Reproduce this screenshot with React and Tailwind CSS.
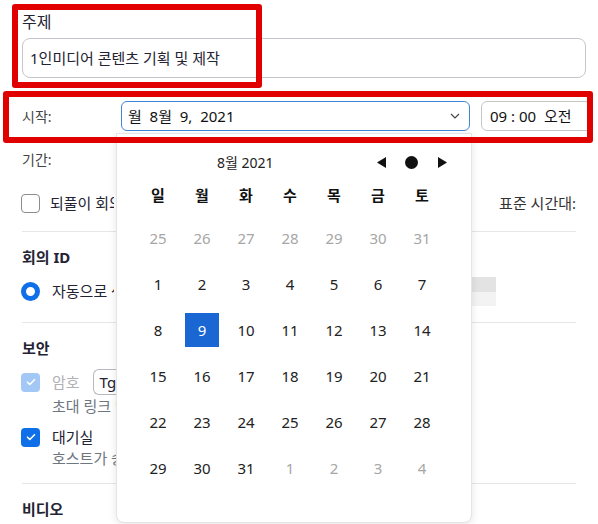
import React from "react";

const FONT = { fontFamily: "'Noto Sans', 'Noto Sans CJK KR', sans-serif" };

function Check({ disabled }) {
  return (
    <div
      className={`w-[19px] h-[19px] rounded-[4px] flex items-center justify-center ${
        disabled ? "bg-[#a3c8f5]" : "bg-[#0e6fe8]"
      }`}
    >
      <svg width="12" height="12" viewBox="0 0 12 12" fill="none" stroke="white" strokeWidth="1.6">
        <path d="M2.5 6.2l2.3 2.3 4.7-4.8" strokeLinecap="round" strokeLinejoin="round" />
      </svg>
    </div>
  );
}

const weeks = [
  [25, 26, 27, 28, 29, 30, 31],
  [1, 2, 3, 4, 5, 6, 7],
  [8, 9, 10, 11, 12, 13, 14],
  [15, 16, 17, 18, 19, 20, 21],
  [22, 23, 24, 25, 26, 27, 28],
  [29, 30, 31, 1, 2, 3, 4],
];

function Calendar() {
  return (
    <div className="absolute left-[116px] top-[133px] w-[356px] h-[390px] bg-white border border-[#e4e4e6] rounded-b-[8px] shadow-[0_2px_8px_rgba(0,0,0,0.10)] pt-[17px]">
      <div className="flex items-center h-[22px]">
        <span className="ml-[100px] text-[14px] text-[#222]">8월 2021</span>
        <div className="ml-[103px] flex items-center">
          <svg width="9" height="11" viewBox="0 0 9 11">
            <path d="M0 5.5L9 0v11z" fill="#111" />
          </svg>
          <div className="ml-[19px] w-[13px] h-[13px] rounded-full bg-[#111]" />
          <svg className="ml-[20px]" width="9" height="11" viewBox="0 0 9 11">
            <path d="M9 5.5L0 0v11z" fill="#111" />
          </svg>
        </div>
      </div>
      <div className="mt-[11px] ml-[19px] grid grid-cols-7 w-[308px] h-[22px] items-center">
        {["일", "월", "화", "수", "목", "금", "토"].map((d) => (
          <span key={d} className="text-center text-[15px] font-bold text-[#111]">
            {d}
          </span>
        ))}
      </div>
      <div className="mt-[9px] ml-[19px] w-[308px]">
        {weeks.map((w, wi) => (
          <div key={wi} className="grid grid-cols-7 h-[46px] items-center">
            {w.map((d, di) => {
              const outside = wi === 0 || (wi === 5 && di > 2);
              const sel = wi === 2 && d === 9;
              return (
                <div key={di} className="flex justify-center">
                  <span
                    className={`w-[34px] h-[34px] flex items-center justify-center text-[15px] ${
                      sel ? "bg-[#1a66d2] text-white" : outside ? "text-[#a6a6a6]" : "text-[#222]"
                    }`}
                  >
                    {d}
                  </span>
                </div>
              );
            })}
          </div>
        ))}
      </div>
    </div>
  );
}

export default function App() {
  return (
    <div className="relative w-[598px] h-[524px] overflow-hidden bg-white text-[#232333]" style={FONT}>
      <div className="px-[22px] pt-[12px]">
        {/* 주제 */}
        <div className="h-[20px] text-[16px] leading-[20px]">주제</div>
        <div className="mt-[6px] w-[564px] h-[40px] border border-[#c5c5cc] rounded-[8px] pl-[7px] flex items-center text-[15px]">
          1인미디어 콘텐츠 기획 및 제작
        </div>

        {/* 시작 */}
        <div className="mt-[23px] h-[30px] flex items-center">
          <span className="w-[99px] shrink-0 text-[14px] text-[#444]">시작:</span>
          <div className="w-[349px] shrink-0 h-[30px] border border-[#3f86d8] rounded-[6px] pl-[6px] pr-[9px] flex items-center justify-between">
            <span className="text-[15px] whitespace-pre text-[#111]">월  8월  9,  2021</span>
            <svg width="10" height="6" viewBox="0 0 10 6" fill="none" stroke="#444" strokeWidth="1.2">
              <path d="M1 1l4 4 4-4" />
            </svg>
          </div>
          <div className="ml-[11px] w-[112px] h-[30px] border border-[#c5c5cc] rounded-[6px] pl-[8px] flex items-center shrink-0">
            <span className="text-[15px] whitespace-pre text-[#111]">09 : 00  오전</span>
          </div>
        </div>

        {/* 기간 */}
        <div className="mt-[17px] h-[22px] flex items-center text-[14px] text-[#444]">기간:</div>

        <div className="mt-[22px] h-[22px] flex items-center">
          <div className="w-[19px] h-[19px] -ml-px rounded-[4px] border-[1.5px] border-[#8c8c8c] shrink-0" />
          <span className="ml-[10px] w-[64px] overflow-hidden whitespace-nowrap text-[15px]">되풀이 회의</span>
          <span className="ml-auto text-[15px] text-[#333]">표준 시간대:</span>
        </div>

        <div className="mt-[17px] h-px bg-[#e6e6e9]" />

        {/* 회의 ID */}
        <div className="mt-[14px] h-[22px] flex items-center text-[15px] font-bold">회의 ID</div>
        <div className="mt-[12px] h-[22px] flex items-center">
          <div className="w-[19px] h-[19px] -ml-px rounded-full border-[5px] border-[#0e6fe8] shrink-0" />
          <span className="ml-[12px] w-[62px] overflow-hidden whitespace-nowrap text-[15px]">자동으로 생성</span>
          <div className="ml-auto mr-[80px] flex">
            <div className="w-[14px] h-[29px] bg-[#f4f4f4]" />
            <div className="w-[24px] h-[29px] flex flex-col">
              <div className="h-[15px] bg-[#e3e3e3]" />
              <div className="h-[14px] bg-[#f3f3f3]" />
            </div>
          </div>
        </div>

        <div className="mt-[20px] h-px bg-[#e6e6e9]" />

        {/* 보안 */}
        <div className="mt-[14px] h-[22px] flex items-center text-[15px] font-bold">보안</div>
        <div className="mt-[9px] h-[28px] flex items-center">
          <div className="-ml-px">
            <Check disabled />
          </div>
          <span className="ml-[12px] text-[15px] text-[#b0b0b6]">암호</span>
          <div className="ml-[13px] w-[30px] h-[26px] border border-r-0 border-[#b8b8be] rounded-l-[6px] pl-[6px] flex items-center text-[15px] overflow-hidden">
            Tg
          </div>
        </div>
        <div className="h-[20px] flex items-center pl-[30px]">
          <span className="w-[64px] overflow-hidden whitespace-nowrap text-[15px] text-[#6e7680]">초대 링크 안에 암호 포함</span>
        </div>
        <div className="mt-[10px] h-[22px] flex items-center">
          <div className="-ml-px">
            <Check />
          </div>
          <span className="ml-[12px] text-[15px]">대기실</span>
        </div>
        <div className="h-[20px] flex items-center pl-[30px]">
          <span className="w-[64px] overflow-hidden whitespace-nowrap text-[15px] text-[#6e7680]">호스트가 승인한 사용자만</span>
        </div>

        <div className="mt-[15px] h-px bg-[#e6e6e9]" />

        <div className="mt-[14px] h-[22px] flex items-center text-[15px] font-bold">비디오</div>
      </div>

      <Calendar />

      {/* annotation boxes */}
      <div className="absolute left-[12px] top-[4px] w-[250px] h-[84px] border-[6px] border-[#e00000] rounded-[3px]" />
      <div className="absolute left-[3px] top-[91px] w-[590px] h-[52px] border-[6px] border-[#e00000] rounded-[3px]" />
    </div>
  );
}
